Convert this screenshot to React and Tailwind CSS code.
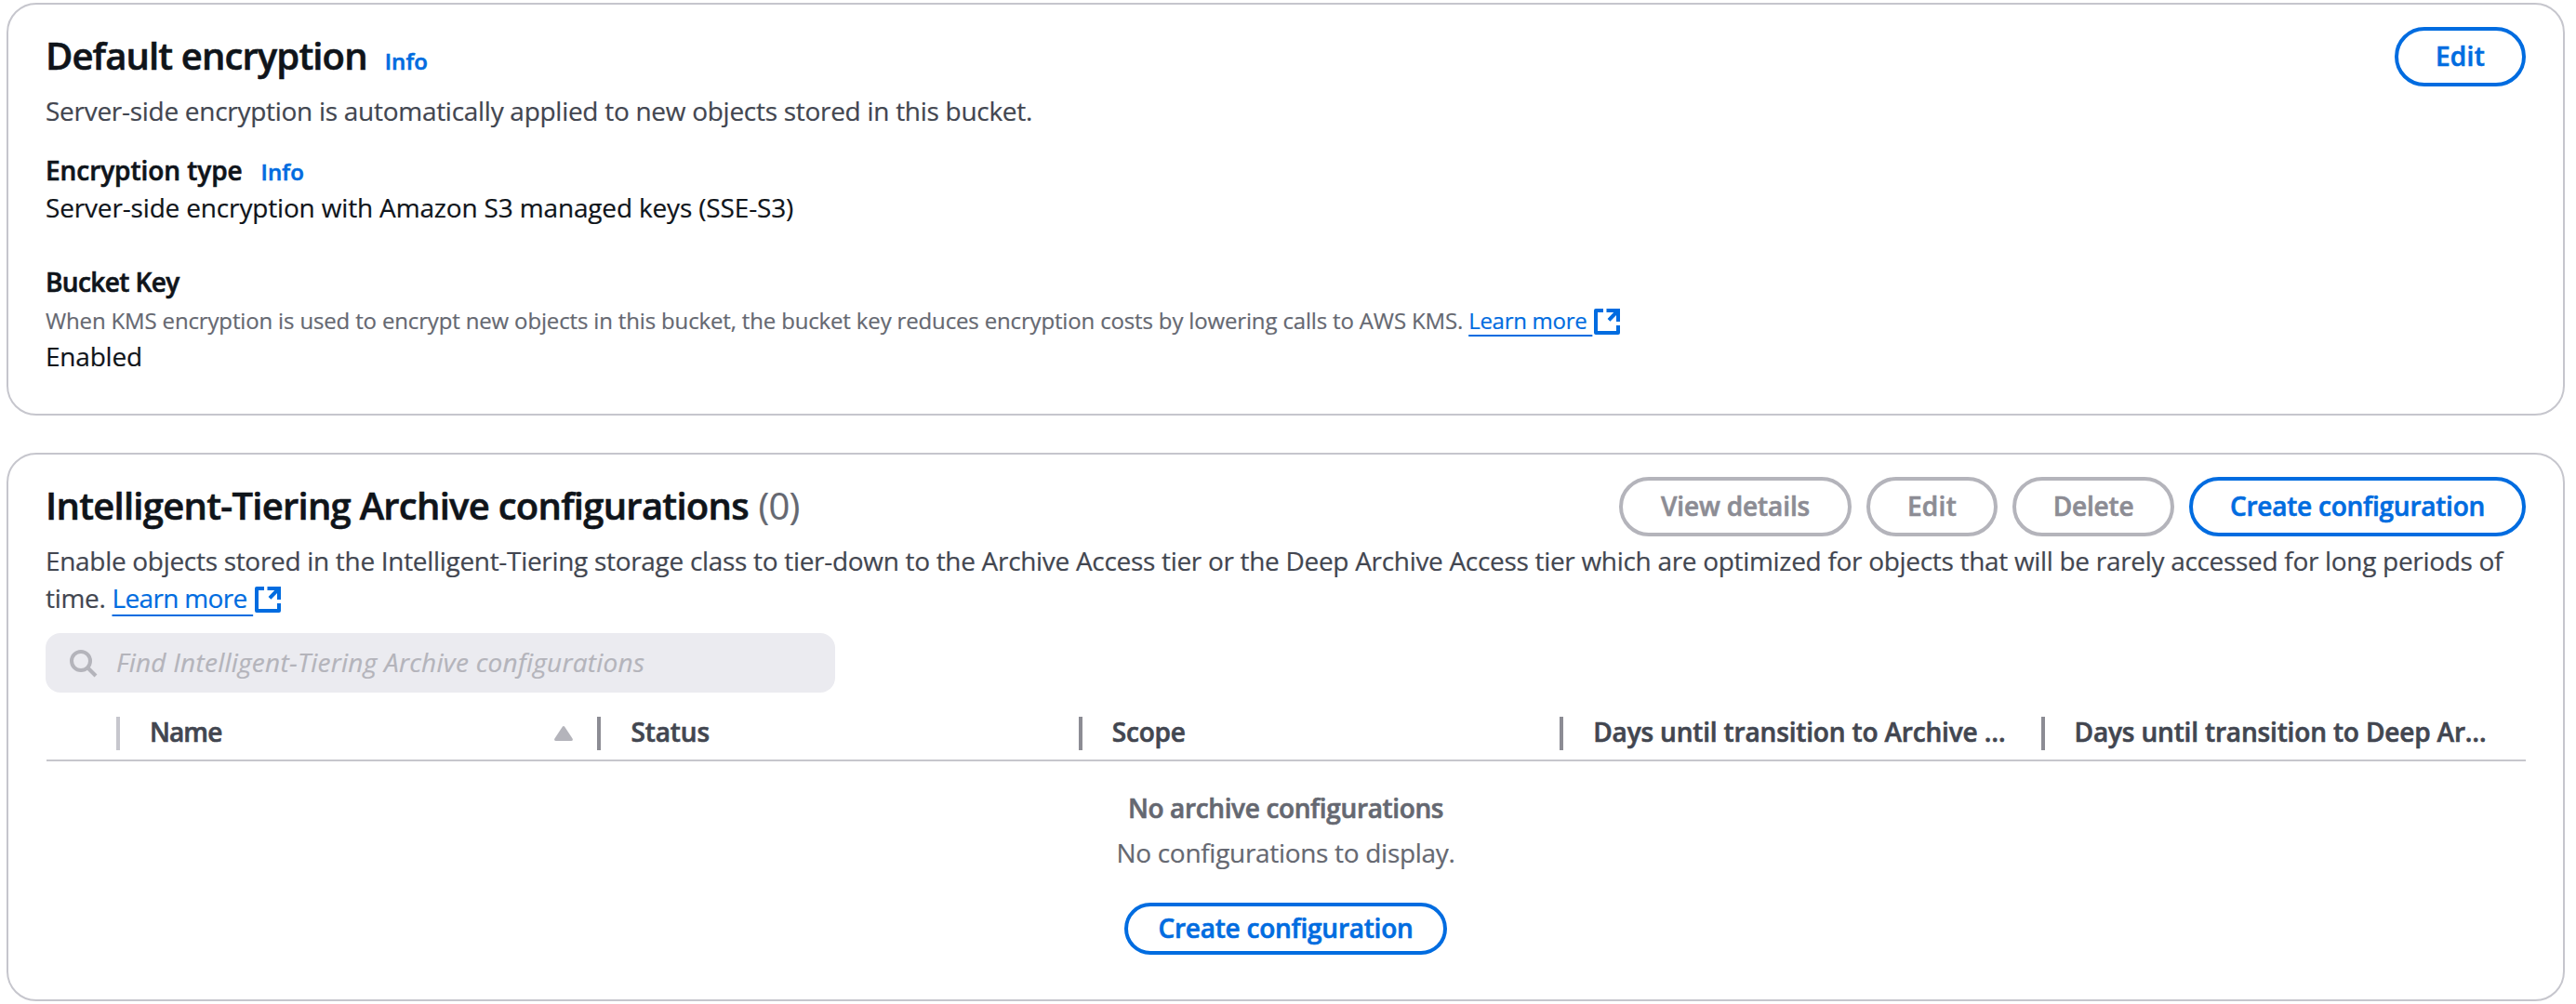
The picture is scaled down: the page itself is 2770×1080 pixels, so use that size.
const COLUMNS = [
  { label: "Name", sortable: true, tracking: "tracking-[-0.9px]" },
  { label: "Status", tracking: "tracking-[-0.1px]" },
  { label: "Scope", tracking: "tracking-[-0.2px]" },
  { label: "Days until transition to Archive …", tracking: "tracking-[-0.16px]" },
  { label: "Days until transition to Deep Ar…", tracking: "tracking-[-0.16px]" },
];

const STRONG = "font-semibold [-webkit-text-stroke:0.6px_currentColor]";

function ExternalIcon({ className = "" }) {
  return (
    <svg viewBox="0 0 32 32" className={`inline-block size-8 ${className}`} fill="none" stroke="#006ce0" strokeWidth="4" aria-hidden="true">
      <path d="M12 4H4V28H28V20" strokeLinejoin="round" />
      <path d="M15.5 4H28V16M28 4L18 14.3" />
    </svg>
  );
}

function SearchIcon() {
  return (
    <svg viewBox="0 0 32 32" className="size-8 shrink-0" fill="none" stroke="#b4b4bb" strokeWidth="4" aria-hidden="true">
      <circle cx="14" cy="14" r="10" />
      <path d="M21 21L30 30" />
    </svg>
  );
}

function LearnMore({ className = "" }) {
  return (
    <a className="whitespace-nowrap text-[#006ce0]">
      <span className={`underline decoration-2 ${className}`}>Learn more&nbsp;</span>
      <ExternalIcon className="-my-3 -translate-y-[2px]" />
    </a>
  );
}

function Info({ className = "" }) {
  return <a className={`text-[24px] tracking-[0.1px] text-[#006ce0] ${STRONG} ${className}`}>Info</a>;
}

function Button({ children, disabled = false, className = "" }) {
  return (
    <button
      type="button"
      disabled={disabled}
      className={`flex items-center justify-center rounded-full border-4 pb-[3px] whitespace-nowrap ${STRONG} ${
        disabled ? "border-[#b4b4bb] text-[#8c8c94]" : "border-[#006ce0] text-[#006ce0]"
      } ${className}`}
    >
      {children}
    </button>
  );
}

function Card({ children, className = "" }) {
  return <section className={`rounded-[32px] border-2 border-[#c6c6cd] bg-white px-10 pt-6 ${className}`}>{children}</section>;
}

export default function App() {
  return (
    <main className="flex h-[1080px] w-[2770px] flex-col gap-10 overflow-hidden bg-white pt-[3px] pr-3 pl-[7px] font-['Open_Sans','Noto_Sans',sans-serif] text-[28px] leading-[40px] text-[#0f141a] [-webkit-text-stroke:0.2px_currentColor]">
      <Card className="h-[444px] shrink-0">
        <div className="flex h-16 items-start justify-between">
          <div className="flex items-baseline pt-[7px]">
            <h2 className={`text-[40px] leading-[48px] tracking-[-0.88px] ${STRONG}`}>Default encryption</h2>
            <Info className="ml-[19px]" />
          </div>
          <Button className="h-16 w-[141px] tracking-[0.3px]">Edit</Button>
        </div>
        <p className="mt-[6px] tracking-[-0.282px] text-[#424650]">
          Server-side encryption is automatically applied to new objects stored in this bucket.
        </p>

        <div className="mt-6 flex h-10 items-baseline">
          <h3 className={`tracking-[-0.06px] ${STRONG}`}>Encryption type</h3>
          <Info className="ml-[20px]" />
        </div>
        <p className="tracking-[-0.162px]">Server-side encryption with Amazon S3 managed keys (SSE-S3)</p>

        <h3 className={`mt-10 tracking-[-0.6px] ${STRONG}`}>Bucket Key</h3>
        <p className="mt-[3px] h-[37px] text-[24px] leading-[37px] tracking-[-0.154px] text-[#656871]">
          When KMS encryption is used to encrypt new objects in this bucket, the bucket key reduces encryption costs by lowering
          calls to AWS KMS.{" "}
          <LearnMore className="tracking-[-0.285px] underline-offset-[6px]" />
        </p>
        <p className="tracking-[-0.2px]">Enabled</p>
      </Card>

      <Card className="h-[590px] shrink-0">
        <div className="flex h-16 items-start justify-between">
          <h2 className={`pt-[7px] text-[40px] leading-[48px] tracking-[-0.74px] ${STRONG}`}>
            Intelligent-Tiering Archive configurations{" "}
            <span className="ml-px font-normal tracking-[-0.83px] text-[#656871] [-webkit-text-stroke:0.2px_currentColor]">(0)</span>
          </h2>
          <div className="flex gap-4">
            <Button disabled className="h-16 w-[250px] tracking-[-0.12px]">View details</Button>
            <Button disabled className="h-16 w-[141px] tracking-[0.3px]">Edit</Button>
            <Button disabled className="h-16 w-[174px] tracking-[-0.18px]">Delete</Button>
            <Button className="h-16 w-[362px] tracking-[-0.23px]">Create configuration</Button>
          </div>
        </div>
        <p className="mt-[6px] h-20 tracking-[-0.307px] text-[#424650]">
          Enable objects stored in the Intelligent-Tiering storage class to tier-down to the Archive Access tier or the Deep
          Archive Access tier which are optimized for objects that will be rarely accessed for long periods of time.{" "}
          <LearnMore className="tracking-[-0.666px] underline-offset-[7px]" />
        </p>

        <div className="mt-[18px] flex h-16 w-[849px] items-center rounded-2xl bg-[#ebebf0] pl-6">
          <SearchIcon />
          <span className="ml-5 pb-[2px] tracking-[0.246px] text-[#b4b4bb] italic">Find Intelligent-Tiering Archive configurations</span>
        </div>

        <div className="ml-px flex h-[74px] border-b-2 border-[#c6c6cd] pt-[26px]">
          <div className="h-9 w-[79px] shrink-0 border-r-4 border-[#c6c6cd]" />
          <div className="grid h-9 flex-1 grid-cols-5">
            {COLUMNS.map((col, i) => (
              <div
                key={col.label}
                className={`flex h-9 min-w-0 items-center justify-between pr-[26px] pl-8 ${
                  i < COLUMNS.length - 1 ? "border-r-4 border-[#8c8c94]" : ""
                }`}
              >
                <span className={`pb-[4px] whitespace-nowrap text-[#424650] ${STRONG} ${col.tracking}`}>{col.label}</span>
                {col.sortable && (
                  <svg viewBox="0 0 20 16" className="h-4 w-5" fill="#b4b4bb" aria-hidden="true">
                    <path d="M8.8 0.8Q10 -0.8 11.2 0.8L19.6 13.4Q20.6 16 18 16H2Q-0.6 16 0.4 13.4Z" />
                  </svg>
                )}
              </div>
            ))}
          </div>
        </div>

        <div className="flex flex-col items-center pt-[30px] text-[#656871]">
          <p className={`tracking-[-0.36px] ${STRONG}`}>No archive configurations</p>
          <p className="mt-2 tracking-[-0.307px]">No configurations to display.</p>
          <Button className="mt-[34px] h-14 w-[347px] tracking-[-0.23px]">Create configuration</Button>
        </div>
      </Card>
    </main>
  );
}
